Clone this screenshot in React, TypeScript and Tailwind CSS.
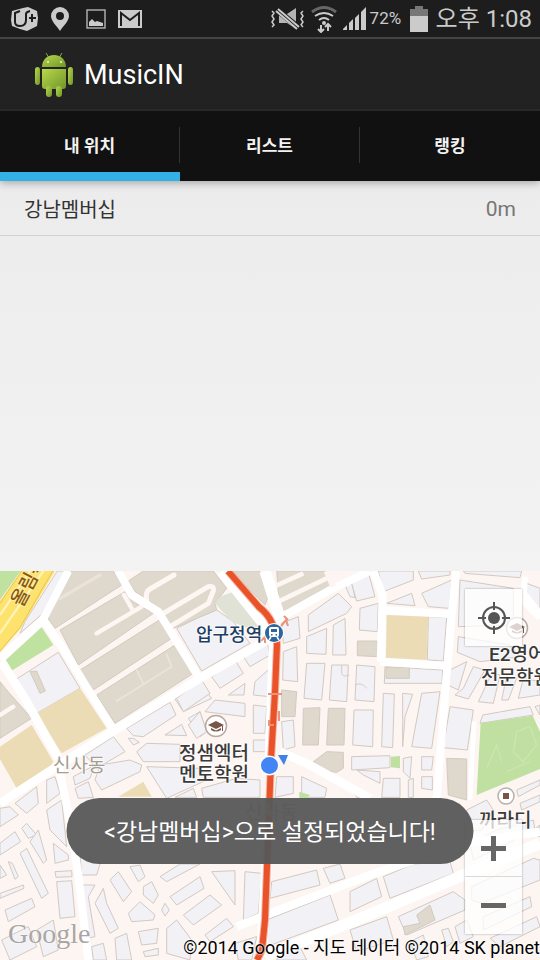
import React, { useState } from "react";

type Tile = { x: number; y: number; plain: string[]; built?: string[] };

// Street blocks, drawn in thirds of a pixel from each tile's corner.
const tiles: Tile[] = [
  {
    x: 0,
    y: 565,
    plain: [
      "172,18 195,18 125,148 60,205 75,170",
      "45,345 175,262 240,370 110,445",
      "530,190 600,155 650,135 700,170 750,235 605,318",
      "380,490 510,412 528,450 430,515 400,512",
      "525,402 600,355 635,400 550,440",
      "495,510 545,478 560,512",
      "565,460 600,440 620,500 600,515",
      "410,560 440,535 540,538 540,590 430,590",
      "385,520 400,520 418,532 400,540",
      "255,570 340,515 375,560 290,610",
    ],
    built: [
      "215,18 340,18 365,60 165,190 140,155",
      "180,195 375,80 400,110 460,145 235,300",
      "240,315 478,165 512,222 280,375",
      "290,390 525,240 580,325 345,475",
      "385,48 430,18 640,18 680,70 645,115 650,135 520,190 480,130 430,95 405,80",
      "0,350 20,375 95,460 0,520",
      "90,320 110,318 136,378 120,385",
    ],
  },
  {
    x: 170,
    y: 565,
    plain: [
      "20,400 95,345 120,385 40,440",
      "125,335 195,285 220,325 150,370",
      "220,275 290,225 300,270 240,305",
      "175,390 225,355 222,390",
      "255,350 300,310 298,395 250,390",
      "105,440 135,405 225,415 225,455",
      "250,420 290,425 285,505 250,505",
      "55,480 90,440 110,500 80,520",
      "250,525 290,525 288,560 250,560",
      "335,175 385,155 390,220 340,235",
      "340,260 380,245 383,350 338,345",
      "415,150 505,85 545,125 530,145 415,200",
      "335,470 370,465 375,545 340,555",
      "410,215 470,190 468,268 410,265",
      "490,180 525,160 528,270 488,270",
      "410,295 465,295 455,405 402,400",
      "485,300 535,300 530,410 478,405",
      "525,60 545,50 555,98 540,95",
    ],
    built: [
      "320,18 470,18 490,60 330,150",
      "190,18 268,18 300,80 285,120 240,75",
      "400,430 450,428 445,540 398,540",
      "475,430 525,430 522,540 470,540",
      "335,375 380,380 375,455 335,455",
      "430,590 470,560 520,562 520,610 500,622 470,618",
    ],
  },
  {
    x: 350,
    y: 565,
    plain: [
      "2,45 55,22 75,95 20,108",
      "85,18 190,18 190,45 100,80",
      "205,18 300,18 300,30 215,42",
      "30,130 85,115 82,200 28,195",
      "110,115 185,85 195,122",
      "215,85 305,45 297,130 235,125",
      "340,18 515,18 510,38 345,25",
      "330,45 490,70 490,180 325,185",
      "530,55 570,70 570,140 525,110",
      "325,215 480,240 510,275 390,290 322,262",
      "235,155 290,158 280,288 232,285",
      "105,305 278,315 276,355 103,355",
      "20,300 75,305 72,410 15,405",
      "12,435 70,435 68,545 8,540",
      "100,385 133,387 128,548 95,545",
      "158,385 188,388 165,455 158,545",
      "215,385 270,380 245,550 185,545",
      "300,425 370,435 352,555 280,548",
      "300,315 350,290 325,375 298,362",
      "370,305 405,315 355,402 315,390 340,370",
      "425,325 450,330 430,415 385,410",
      "470,335 500,340 475,405 455,405",
      "520,340 570,350 570,390 505,400",
      "398,450 540,425 550,450 390,475",
      "5,575 120,572 120,608 5,615",
      "160,580 185,575 180,640 160,620",
      "215,575 250,575 245,615 215,615",
      "555,425 570,420 570,450",
    ],
    built: [
      "22,228 82,228 82,275 22,272",
      "108,307 178,307 178,340 108,340",
      "290,580 350,582 350,705 295,690",
    ],
  },
  {
    x: 0,
    y: 760,
    plain: [
      "220,50 285,15 270,55 225,75",
      "285,60 300,15 390,0 425,15 420,35 305,90",
      "440,20 600,25 620,60 500,115",
      "225,85 265,65 280,112 235,115",
      "0,145 30,140 55,165 0,200",
      "45,130 110,80 115,130 80,160",
      "140,60 165,50 180,100 140,130",
      "140,150 185,120 200,260 150,210",
      "0,250 45,215 62,245 0,285",
      "65,205 80,190 110,225 85,235",
      "25,305 37,310 55,350 45,358",
      "0,315 20,345 0,355",
      "60,280 80,265 145,400 125,415",
      "90,245 115,210 140,300 130,310",
      "160,250 205,285 205,300 165,310",
      "165,335 215,332 216,350 168,352",
      "170,365 215,362 225,470 180,475",
      "0,400 70,375 72,385 0,415",
      "15,450 95,415 105,440 25,485",
      "245,375 285,375 265,410 285,530 262,535",
      "285,430 310,385 320,430 355,505 330,520",
      "330,360 355,335 395,395 370,425",
      "390,320 420,315 435,350 415,365",
      "430,380 455,365 475,405 460,430 430,405",
      "480,350 540,312 600,312 500,365",
      "510,410 600,350 612,385 530,435",
      "385,460 420,425 465,465 460,480 395,485",
      "485,450 495,430 508,450 495,468",
      "345,535 380,520 395,600 350,600",
      "415,515 475,505 470,550 425,555",
      "430,575 475,565 475,585 435,590",
      "500,505 530,480 575,540 570,600 500,580",
      "275,560 310,550 320,600 280,600",
      "110,510 160,480 175,570 130,590",
      "5,540 85,500 110,560 30,600",
      "240,290 300,312 290,345 245,345",
    ],
  },
  {
    x: 170,
    y: 760,
    plain: [
      "125,335 195,332 195,435",
      "225,335 275,340 265,460 220,480",
      "95,85 200,55 270,60 270,112 100,112",
      "15,112 70,85 80,112",
      "40,465 120,405 155,435 70,495",
      "105,525 170,475 190,500 120,545",
      "305,365 440,330 450,375 300,415",
      "290,480 480,405 505,480 290,560",
      "460,325 510,312 525,355 480,370",
      "320,50 370,50 370,100 315,112",
      "395,50 470,85 465,112 395,112",
      "560,30 630,35 630,70 580,45",
      "545,85 600,105 600,112 560,112",
      "330,580 390,560 410,600 320,600",
      "195,550 260,530 245,600 205,600",
    ],
  },
  {
    x: 350,
    y: 760,
    plain: [
      "100,55 150,55 150,112 95,112",
      "175,60 190,55 190,112 175,112",
      "215,50 247,50 247,90 215,85",
      "0,395 80,355 95,410 0,455",
      "100,350 190,312 300,305 310,340 120,415",
      "145,470 310,395 345,420 345,450 170,525",
      "180,545 220,525 235,590 200,600",
      "275,510 295,505 310,545 290,560",
      "315,500 350,480 370,530 330,550",
      "365,380 550,295 570,300 570,360 395,430 365,420",
      "400,470 540,410 545,440 400,510",
      "500,90 570,60 570,75 505,110",
      "510,130 570,105 570,125 515,150",
      "350,150 410,120 430,150 395,210 350,215",
      "360,250 440,210 550,180 555,210 370,300",
      "420,535 560,470 570,500 450,560",
      "0,510 110,470 130,540 20,575",
    ],
    built: [
      "200,465 240,435 255,480 165,525 160,500 210,490",
      "550,210 570,195 570,230 555,225",
    ],
  },
];

function StreetMap() {
  return (
    <svg
      viewBox="0 571 540 389"
      preserveAspectRatio="xMidYMid slice"
      className="absolute inset-0 h-full w-full"
      role="img"
      aria-label="지도"
    >
      <rect x="0" y="571" width="540" height="389" fill="#fdf5f1" />
      {tiles.map((t) => (
        <g key={`${t.x}-${t.y}`} transform={`translate(${t.x} ${t.y}) scale(${1 / 3})`} strokeWidth="3" strokeLinejoin="round">
          {t.plain.map((p) => (
            <polygon key={p} points={p} fill="#f2f1f5" stroke="#d3c9c2" />
          ))}
          {t.built?.map((p) => (
            <polygon key={p} points={p} fill="#dfd8cd" stroke="#d3cbc0" />
          ))}
        </g>
      ))}

      <g transform={`translate(0 565) scale(${1 / 3})`} fill="none">
        <polygon points="0,18 62,18 0,105" fill="#c0e2a0" />
        <polygon points="65,18 165,18 62,190 0,262 0,108" fill="#fde36d" />
        <path d="M90 18 0 150M130 18 0 205" stroke="#fff3b5" strokeWidth="7" />
        <path d="M65 18 0 115M158 18 60 188 0 258" stroke="#e9c255" strokeWidth="3" />
        <polygon points="12,290 125,187 160,240 30,320" fill="#bfe2a0" />
        <polygon points="110,445 240,370 320,490 185,565" fill="#ebdcb5" />
        <polygon points="0,545 95,480 160,590 150,605 50,670 0,582" fill="#ebdcb5" />
        <polygon points="355,695 430,650 455,695" fill="#ebdcb5" />
        <g stroke="#fdf6f2" strokeLinecap="round">
          <path d="M290 205 425 125M372 90 395 130M0 450 40 425" strokeWidth="13" />
          <path d="M440 105 Q435 80 450 72L522 30M490 145 625 65Q650 60 635 90L625 115 510 185" strokeWidth="15" />
          <path d="M350 408 515 305 500 268M410 315 430 355" strokeWidth="5" stroke="#ebe4da" />
          <path d="M180 100 300 30" strokeWidth="10" stroke="#ebe3d9" />
        </g>
        <g stroke="#ffffff" strokeLinejoin="round">
          <path d="M205 18 128 165 0 282" strokeWidth="24" />
          <path d="M5 290 80 410 175 580" strokeWidth="26" />
          <path d="M130 165 185 245 340 495" strokeWidth="24" />
          <path d="M355 18 395 90 475 140 595 335" strokeWidth="24" />
          <path d="M0 715 170 605 345 495 600 340 820 215" strokeWidth="26" />
          <path d="M175 600 205 745 235 930 265 1185" strokeWidth="24" />
        </g>
      </g>

      <g transform={`translate(170 565) scale(${1 / 3})`} fill="none">
        <polygon points="150,95 205,75 295,175 250,195 185,170 135,115" fill="#dfe2d5" />
        <path d="M325 110 470 40M300 70 400 25" stroke="#fdf6f2" strokeWidth="14" />
        <path d="M155 18 300 200M285 18 330 160M315 200 300 600" stroke="#fff" strokeWidth="34" />
        <path d="M310 170 480 75 600 18" stroke="#fff" strokeWidth="24" />
        <path d="M330 560 410 595 600 700" stroke="#fff" strokeWidth="26" />
        <polygon points="388,680 420,690 410,700 388,700" fill="#bfe0a0" />
        <path d="M470 18 490 65" stroke="#fdf5f1" strokeWidth="18" />
        <path d="M515 300V325Q518 338 538 330M555 360Q575 350 590 370" stroke="#d6cdc6" strokeWidth="3" />
      </g>

      <g transform={`translate(350 565) scale(${1 / 3})`} fill="none">
        <g stroke="#fff" strokeWidth="24" strokeLinejoin="round">
          <path d="M70 18 98 90 92 290M318 18 305 150 285 390 260 700M95 135 305 148M90 290 290 302" />
          <path d="M522 85 570 145M525 35 520 110 570 160" strokeWidth="18" />
          <path d="M372 470 360 705" strokeWidth="14" />
        </g>
        <polygon points="110,150 235,155 230,285 108,278" fill="#ebdcb5" />
        <polygon points="392,475 548,452 570,500 570,612 380,690" fill="#bfe0a0" />
        <polygon points="123,575 150,573 150,610 123,607" fill="#bfe0a0" />
        <path d="M410 610 440 540 455 590M500 500 540 485 560 540 520 590 490 560zM470 620 540 590" stroke="#cbe5b0" strokeWidth="4" />
      </g>

      <g transform={`translate(170 760) scale(${1 / 3})`} fill="none" stroke="#fff">
        <path d="M200 500 300 460 600 345 880 250 1110 215" strokeWidth="25" />
        <path d="M285 590 420 535 560 480 880 345 1110 250" strokeWidth="34" />
        <path d="M290 300 275 590" strokeWidth="32" />
      </g>

      {/* Subway line */}
      <path d="M228 571 259 607Q276 620 277 645L275 692 271 760 265 920 262 950 257 960" fill="none" stroke="#f2b8a4" strokeWidth="8" />
      <path d="M228 571 259 607Q276 620 277 645L275 692 271 760 265 920 262 950 257 960" fill="none" stroke="#ea532a" strokeWidth="6" />
      <path d="M281 626l5-6 2 6M284 616l4 4M261 641l4-4v6M268 694h14M269 720v5h5M279 711v10" fill="none" stroke="#eb9378" strokeWidth="2" />

      {/* Station */}
      <circle cx="274" cy="633" r="10" fill="#fff" />
      <circle cx="274" cy="633" r="9" fill="#2f659f" />
      <rect x="269" y="627" width="10" height="10" rx="2" fill="#fff" />
      <path d="M271 629h6v3h-6zM271 634h1.500v1.500H271zM275.500 634h1.500v1.500h-1.500z" fill="#2f659f" />
      <path d="m271 637-2 3M277 637l2 3" stroke="#fff" strokeWidth="1.500" />

      {/* School pins */}
      {[
        [216, 726],
        [517, 628],
      ].map(([x, y]) => (
        <g key={x} transform={`translate(${x} ${y})`}>
          <circle r="10.500" fill="#fff" stroke="#b9aaa0" strokeWidth="1.500" />
          <path d="m-8-1 8-4 8 4-8 4zM-5 2v2q5 3 10 0V2L0 4.500zM6 0h1v5H6z" fill="#795548" />
        </g>
      ))}
      <circle cx="506" cy="796" r="8" fill="#fff" stroke="#b9b0aa" strokeWidth="1.500" />
      <rect x="503" y="793" width="6" height="6" fill="#795548" />

      {/* Current position */}
      <path d="M278 755h10l-4 10z" fill="#3f83e6" />
      <circle cx="269.500" cy="765.500" r="10" fill="#fff" />
      <circle cx="269.500" cy="765.500" r="8.500" fill="#4285f4" />

      <g
        fontFamily="Roboto, 'Noto Sans CJK KR', sans-serif"
        paintOrder="stroke"
        stroke="#fff"
        strokeOpacity="0.7"
        strokeWidth="2"
        strokeLinejoin="round"
      >
        <g fontSize="19" fontWeight="500" fill="#3a3a3a">
          <text x="179" y="760">정샘엑터</text>
          <text x="179" y="781">멘토학원</text>
          <text x="489" y="661">E2영어</text>
          <text x="481" y="684">전문학원</text>
          <text x="479" y="827">까라디</text>
        </g>
        <text x="196" y="641" fontSize="18" fontWeight="500" fill="#1d3f66">압구정역</text>
        <text x="53" y="772" fontSize="19" fill="#a39d93">신사동</text>
        <text x="245" y="819" fontSize="19" fill="#a39d93">신사동</text>
        <text transform="translate(22 608) rotate(-62)" fontSize="19" fontWeight="500" fill="#8a5a14" stroke="#fff0a8">올림픽</text>
      </g>
    </svg>
  );
}

function StatusBar() {
  return (
    <div className="flex h-[39px] items-center justify-between border-b-2 border-[#444444] bg-[#1d1d1d] pr-2 pl-[10px] text-[#cbcbcb]">
      <div className="flex items-center gap-3">
        <svg width="28" height="26" viewBox="0 0 28 26">
          <path d="M2 5 13 2 18 1 27 5 28 12 27 20 17 25 10 23 2 20 1 14z" fill="#cbcbcb" />
          <path d="M10 5 5 7v9q0 4 5 4 6 0 6-6V8q0-2 4-3M22 8v8M19 12h7" fill="none" stroke="#1d1d1d" strokeWidth="2" />
        </svg>
        <svg width="20" height="26" viewBox="0 0 20 26">
          <path fillRule="evenodd" d="M10 1a9 9 0 0 0-9 9c0 5 5 9 9 15 4-6 9-10 9-15a9 9 0 0 0-9-9zm0 5a4 4 0 1 1 0 8 4 4 0 0 1 0-8z" fill="#cbcbcb" />
        </svg>
        <svg className="ml-1" width="20" height="20" viewBox="0 0 20 20">
          <path d="M1 1h18v18H1z" fill="none" stroke="#aaa" strokeWidth="1.500" />
          <path d="M3 17v-4l3-3 3 3 2-1 3 1 3 1v3z" fill="#cbcbcb" />
        </svg>
        <svg width="24" height="18" viewBox="0 0 24 18">
          <path d="M0 0h24v18H0z" fill="#cbcbcb" />
          <path d="M3 16V3l9 7 9-7v13" fill="none" stroke="#1d1d1d" strokeWidth="2" />
        </svg>
      </div>
      <div className="flex items-center">
        <svg width="34" height="24" viewBox="0 0 34 24">
          <path d="m1 4 2 2-2 3 2 3-2 3 2 3-2 2M32 4l-2 2 2 3-2 3 2 3-2 3 2 2" fill="none" stroke="#cbcbcb" strokeWidth="1.500" />
          <path d="M8 7h8l9-6v21l-9-6H8z" fill="#b5b5b5" />
          <path d="m5 2 23 19" stroke="#1d1d1d" strokeWidth="6" />
          <path d="M5 4 26 22M7 2l21 18" stroke="#cbcbcb" strokeWidth="2" />
        </svg>
        <svg className="ml-[6px]" width="26" height="28" viewBox="0 0 26 28" fill="none">
          <path d="M1 7q12-9 24 0" stroke="#666" strokeWidth="3" />
          <path d="M4 11q9-6 18 0M8 15q5-4 10 0" stroke="#cbcbcb" strokeWidth="2" />
          <circle cx="13" cy="18" r="2" fill="#cbcbcb" />
          <path d="M10 20v7m-3-3 3 3 3-3M17 26v-7m-3 3 3-3 3 3" stroke="#cbcbcb" strokeWidth="2" />
        </svg>
        <svg className="ml-[5px]" width="26" height="25" viewBox="0 0 26 25" fill="#cbcbcb">
          <path d="M1 24v-1l4-4v5zM7 24v-7l4-4v11zM13 24V12l4-4v16zM19 24V6l5-5v23z" />
        </svg>
        <span className="ml-[2px] w-[35px] text-[17px]">72%</span>
        <svg className="ml-[5px]" width="18" height="28" viewBox="0 0 18 28">
          <path d="M5 1h8v3h5v7H0V4h5z" fill="#777" />
          <path d="M0 11h18v16H0z" fill="#cbcbcb" />
        </svg>
        <span className="ml-2 text-[24px] leading-8 whitespace-nowrap">오후 1:08</span>
      </div>
    </div>
  );
}

function AndroidLogo() {
  return (
    <svg width="40" height="46" viewBox="0 0 40 46">
      <defs>
        <linearGradient id="droid" x1="0" y1="0" x2="1" y2="1">
          <stop offset="0" stopColor="#b9d84b" />
          <stop offset="1" stopColor="#6f952a" />
        </linearGradient>
      </defs>
      <path d="m12 1 3 5M28 1l-3 5" stroke="#8aa83a" strokeWidth="1" />
      <g fill="url(#droid)">
        <path d="M8 15C8 7 14 3 20 3s12 4 12 12z" />
        <path d="M8 17h24v17q0 3-3 3H11q-3 0-3-3z" />
        <rect x="1" y="15" width="5" height="18" rx="3" />
        <rect x="34" y="15" width="5" height="18" rx="3" />
        <rect x="12" y="34" width="6" height="11" rx="3" />
        <rect x="22" y="34" width="6" height="11" rx="3" />
      </g>
      <circle cx="14" cy="10" r="1" fill="#f2f8d8" />
      <circle cx="27" cy="10" r="1" fill="#f2f8d8" />
    </svg>
  );
}

const tabs = ["내 위치", "리스트", "랭킹"];

export default function App() {
  const [active, setActive] = useState(0);
  return (
    <div className="flex min-h-screen flex-col bg-[#eeeeee] font-[Roboto,'Noto_Sans_CJK_KR',sans-serif]">
      <StatusBar />
      <header className="flex h-[72px] items-center gap-[10px] border-b-2 border-[#2c2c2c] bg-[#222222] pt-[2px] pl-[34px]">
        <AndroidLogo />
        <h1 className="text-[27px] leading-9 text-white">MusicIN</h1>
      </header>
      <nav role="tablist" className="z-10 grid h-[70px] grid-cols-3 bg-[#111111] shadow-[0_2px_8px_rgba(0,0,0,0.3)]">
        {tabs.map((label, i) => (
          <button
            key={label}
            role="tab"
            aria-selected={i === active}
            onClick={() => setActive(i)}
            className="flex flex-col text-[17px] leading-6 font-bold text-[#f3f3f3]"
          >
            <span className={`mt-4 flex h-9 w-full items-center justify-center pt-[2px] ${i < 2 ? "border-r border-[#333333]" : ""}`}>
              {label}
            </span>
            <span className={`mt-auto h-[9px] w-full ${i === active ? "bg-[#33b0e4]" : ""}`} />
          </button>
        ))}
      </nav>
      <main className="flex flex-1 flex-col">
        <ul className="flex-1 bg-linear-to-b from-[#ececec] to-[#f3f3f3]">
          <li className="flex h-[55px] items-center justify-between border-b border-[#d2d2d2] px-6 pt-[3px] text-xl">
            <span className="text-[#333333]">강남멤버십</span>
            <span className="text-[21px] text-[#777777]">0m</span>
          </li>
        </ul>
        <section className="relative h-[389px] overflow-hidden">
          <StreetMap />
          <button
            aria-label="현재 위치"
            className="absolute top-[18px] right-[18px] flex size-[57px] items-center justify-center bg-white/75 shadow-[0_0_2px_rgba(0,0,0,0.35)]"
          >
            <svg width="32" height="32" viewBox="0 0 32 32" fill="none" stroke="#555" strokeWidth="2">
              <circle cx="16" cy="16" r="11" />
              <circle cx="16" cy="16" r="6" fill="#555" stroke="none" />
              <path d="M16 0v8M16 24v8M0 16h8M24 16h8" />
            </svg>
          </button>
          <div className="absolute right-[18px] bottom-[26px] flex w-[57px] flex-col divide-y divide-[#d9d9d9] bg-white/75 shadow-[0_0_2px_rgba(0,0,0,0.35)]">
            <button aria-label="확대" className="flex h-[57px] items-center justify-center">
              <svg width="25" height="25" viewBox="0 0 25 25" stroke="#666" strokeWidth="5">
                <path d="M12.500 0v25M0 12.500h25" />
              </svg>
            </button>
            <button aria-label="축소" className="flex h-[57px] items-center justify-center">
              <svg width="25" height="5" viewBox="0 0 25 5">
                <path d="M0 0h25v5H0z" fill="#666" />
              </svg>
            </button>
          </div>
          <div className="absolute bottom-2 left-2 font-['Liberation_Serif',serif] text-[28px] leading-9 text-[#aaa6a4] [text-shadow:0_0_2px_#fff]">
            Google
          </div>
          <p className="absolute right-0 bottom-0 text-[18px] leading-6 whitespace-nowrap text-black [text-shadow:0_0_2px_#fff,0_0_2px_#fff]">
            ©2014 Google - 지도 데이터 ©2014 SK planet
          </p>
          <div
            role="status"
            className="absolute bottom-24 left-1/2 flex h-[66px] w-[407px] -translate-x-1/2 items-center justify-center rounded-full bg-[#575757]/95 pt-1 text-[23px] whitespace-nowrap text-white"
          >
            &lt;강남멤버십&gt;으로 설정되었습니다!
          </div>
        </section>
      </main>
    </div>
  );
}
